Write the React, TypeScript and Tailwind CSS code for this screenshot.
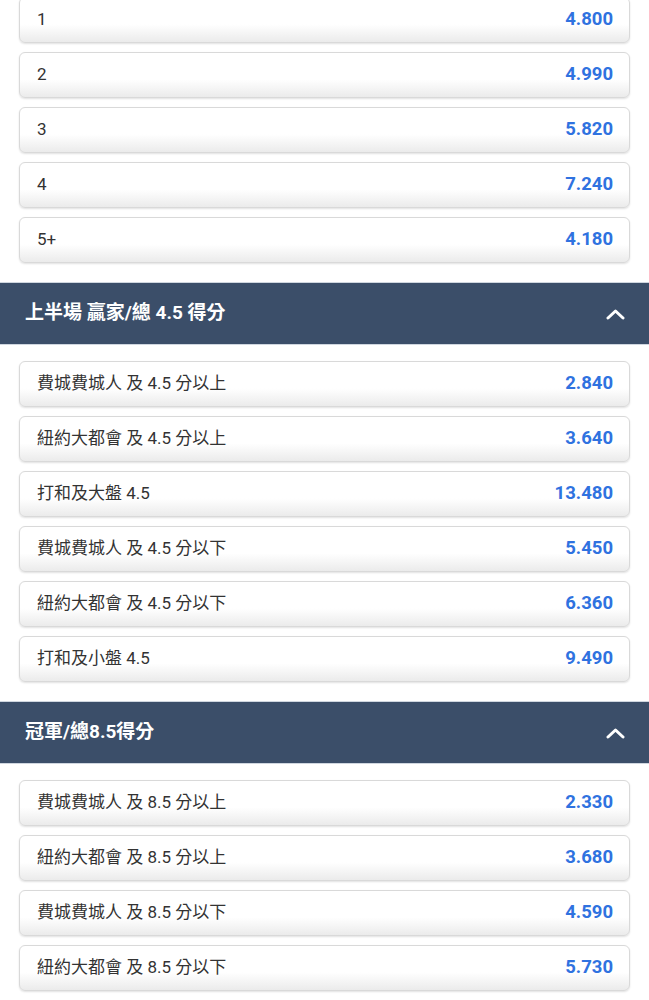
import React from "react";

type Row = { label: string; odds: string };

const sec1: Row[] = [
  { label: "1", odds: "4.800" },
  { label: "2", odds: "4.990" },
  { label: "3", odds: "5.820" },
  { label: "4", odds: "7.240" },
  { label: "5+", odds: "4.180" },
];
const sec2: Row[] = [
  { label: "費城費城人 及 4.5 分以上", odds: "2.840" },
  { label: "紐約大都會 及 4.5 分以上", odds: "3.640" },
  { label: "打和及大盤 4.5", odds: "13.480" },
  { label: "費城費城人 及 4.5 分以下", odds: "5.450" },
  { label: "紐約大都會 及 4.5 分以下", odds: "6.360" },
  { label: "打和及小盤 4.5", odds: "9.490" },
];
const sec3: Row[] = [
  { label: "費城費城人 及 8.5 分以上", odds: "2.330" },
  { label: "紐約大都會 及 8.5 分以上", odds: "3.680" },
  { label: "費城費城人 及 8.5 分以下", odds: "4.590" },
  { label: "紐約大都會 及 8.5 分以下", odds: "5.730" },
];

function Rows({ rows }: { rows: Row[] }) {
  return (
    <div className="flex flex-col gap-[9px] px-[19px]">
      {rows.map((r, i) => (
        <div
          key={i}
          className="flex h-[46px] items-center justify-between rounded-[6px] border border-[#d9d9d9] bg-gradient-to-b from-white from-60% to-[#ebebeb] pl-[17px] pr-[16px] shadow-[0_1px_2px_rgba(0,0,0,0.12)]"
        >
          <span className="text-[17px] text-[#333333]">{r.label}</span>
          <span className="text-[18.5px] font-bold text-[#2f72e0]">{r.odds}</span>
        </div>
      ))}
    </div>
  );
}

function Header({ title }: { title: string }) {
  return (
    <div className="flex h-[63px] items-center justify-between border-y border-[#cfd6df] bg-[#3b4e69] pl-[25px] pr-[24px]">
      <span className="text-[19px] font-bold text-white">{title}</span>
      <svg width="19" height="12" viewBox="0 0 19 12" fill="none">
        <path d="M2 10 L9.5 3 L17 10" stroke="white" strokeWidth="3" strokeLinecap="round" strokeLinejoin="round" />
      </svg>
    </div>
  );
}

export default function App() {
  return (
    <div
      className="min-h-screen overflow-hidden bg-white"
      style={{ fontFamily: 'Roboto, "Noto Sans CJK TC", sans-serif' }}
    >
      <div className="-mt-[3px]">
        <Rows rows={sec1} />
      </div>
      <div className="mt-[19px]">
        <Header title="上半場 贏家/總 4.5 得分" />
      </div>
      <div className="mt-[16px]">
        <Rows rows={sec2} />
      </div>
      <div className="mt-[19px]">
        <Header title="冠軍/總8.5得分" />
      </div>
      <div className="mt-[16px]">
        <Rows rows={sec3} />
      </div>
    </div>
  );
}
